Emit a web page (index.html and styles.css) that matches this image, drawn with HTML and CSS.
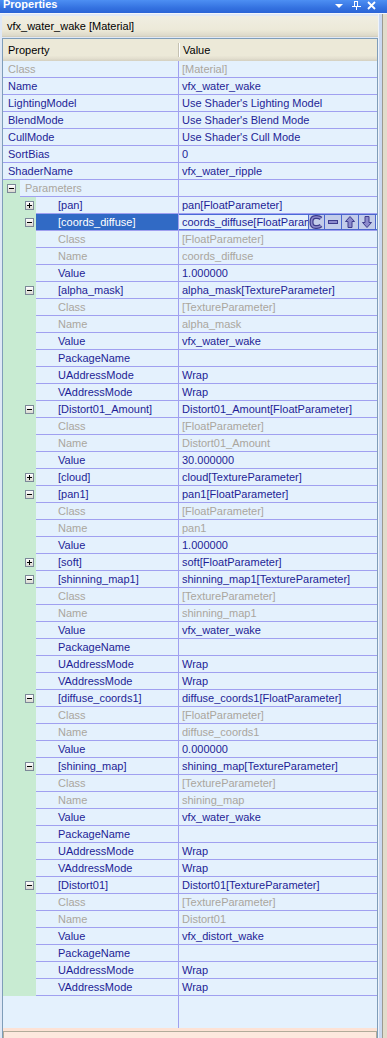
FILE: index.html
```html
<!DOCTYPE html>
<html>
<head>
    <title>Properties</title>
    <link rel="stylesheet" href="styles.css">
</head>
<body>
    <div class="titlebar">
        <span class="title">Properties</span>
        <svg class="tbtns" width="55" height="13" viewBox="0 0 55 13">
            <polygon points="3,4 11,4 7,8" fill="#fff"/>
            <rect x="22.5" y="1.5" width="3" height="5" fill="none" stroke="#fff"/>
            <rect x="25" y="1" width="1" height="6" fill="#fff"/>
            <rect x="20" y="6" width="9" height="1" fill="#fff"/>
            <rect x="24" y="7" width="1" height="3" fill="#fff"/>
            <path d="M36 2 L43 9 M43 2 L36 9" stroke="#fff" stroke-width="1.8"/>
        </svg>
    </div>

    <div class="frame">
        <div class="main">
            <div class="objname">vfx_water_wake [Material]</div>
            <div class="grid">
                <div class="head">
                    <span class="hname">Property</span>
                    <span class="hsep"></span>
                    <span class="hval">Value</span>
                </div>

                <div class="row"><span class="name dim">Class</span><span class="val dim">[Material]</span></div>
                <div class="row"><span class="name">Name</span><span class="val">vfx_water_wake</span></div>
                <div class="row"><span class="name">LightingModel</span><span class="val">Use Shader's Lighting Model</span></div>
                <div class="row"><span class="name">BlendMode</span><span class="val">Use Shader's Blend Mode</span></div>
                <div class="row"><span class="name">CullMode</span><span class="val">Use Shader's Cull Mode</span></div>
                <div class="row"><span class="name">SortBias</span><span class="val">0</span></div>
                <div class="row"><span class="name">ShaderName</span><span class="val">vfx_water_ripple</span></div>
                <div class="row l1"><span class="gut"><i class="tog"></i></span><span class="name dim">Parameters</span><span class="val"></span></div>

                <div class="row l2"><span class="gut"><i class="tog plus"></i></span><span class="name">[pan]</span><span class="val">pan[FloatParameter]</span></div>
                <div class="row l2 sel">
                    <span class="gut"><i class="tog"></i></span>
                    <span class="name">[coords_diffuse]</span>
                    <span class="val">
                        <span class="vtext">coords_diffuse[FloatParam</span>
                        <span class="btns">
                            <span class="btn">
                                <svg width="15" height="14" viewBox="0 0 15 14">
                                    <path d="M12 3.5 Q10.5 2 8 2 L6.5 2 Q2.5 2 2.5 7 Q2.5 12 6.5 12 L8 12 Q10.5 12 12 10.5" fill="none" stroke="#3e3c8c" stroke-width="4"/>
                                    <path d="M12 3.5 Q10.5 2 8 2 L6.5 2 Q2.5 2 2.5 7 Q2.5 12 6.5 12 L8 12 Q10.5 12 12 10.5" fill="none" stroke="#8c8acc" stroke-width="1.6"/>
                                </svg>
                            </span>
                            <span class="btn">
                                <svg width="16" height="14" viewBox="0 0 16 14">
                                    <rect x="3.5" y="5.5" width="9" height="3" fill="#8c8acc" stroke="#3e3c8c"/>
                                </svg>
                            </span>
                            <span class="btn">
                                <svg width="16" height="14" viewBox="0 0 16 14">
                                    <polygon points="8,1.5 12.5,6.5 10,6.5 10,12.5 6,12.5 6,6.5 3.5,6.5" fill="#8c8acc" stroke="#3e3c8c"/>
                                </svg>
                            </span>
                            <span class="btn">
                                <svg width="16" height="14" viewBox="0 0 16 14">
                                    <polygon points="8,12.5 12.5,7.5 10,7.5 10,1.5 6,1.5 6,7.5 3.5,7.5" fill="#8c8acc" stroke="#3e3c8c"/>
                                </svg>
                            </span>
                        </span>
                    </span>
                </div>
                <div class="row l2"><span class="gut"></span><span class="name dim">Class</span><span class="val dim">[FloatParameter]</span></div>
                <div class="row l2"><span class="gut"></span><span class="name dim">Name</span><span class="val dim">coords_diffuse</span></div>
                <div class="row l2"><span class="gut"></span><span class="name">Value</span><span class="val">1.000000</span></div>

                <div class="row l2"><span class="gut"><i class="tog"></i></span><span class="name">[alpha_mask]</span><span class="val">alpha_mask[TextureParameter]</span></div>
                <div class="row l2"><span class="gut"></span><span class="name dim">Class</span><span class="val dim">[TextureParameter]</span></div>
                <div class="row l2"><span class="gut"></span><span class="name dim">Name</span><span class="val dim">alpha_mask</span></div>
                <div class="row l2"><span class="gut"></span><span class="name">Value</span><span class="val">vfx_water_wake</span></div>
                <div class="row l2"><span class="gut"></span><span class="name">PackageName</span><span class="val"></span></div>
                <div class="row l2"><span class="gut"></span><span class="name">UAddressMode</span><span class="val">Wrap</span></div>
                <div class="row l2"><span class="gut"></span><span class="name">VAddressMode</span><span class="val">Wrap</span></div>

                <div class="row l2"><span class="gut"><i class="tog"></i></span><span class="name">[Distort01_Amount]</span><span class="val">Distort01_Amount[FloatParameter]</span></div>
                <div class="row l2"><span class="gut"></span><span class="name dim">Class</span><span class="val dim">[FloatParameter]</span></div>
                <div class="row l2"><span class="gut"></span><span class="name dim">Name</span><span class="val dim">Distort01_Amount</span></div>
                <div class="row l2"><span class="gut"></span><span class="name">Value</span><span class="val">30.000000</span></div>

                <div class="row l2"><span class="gut"><i class="tog plus"></i></span><span class="name">[cloud]</span><span class="val">cloud[TextureParameter]</span></div>

                <div class="row l2"><span class="gut"><i class="tog"></i></span><span class="name">[pan1]</span><span class="val">pan1[FloatParameter]</span></div>
                <div class="row l2"><span class="gut"></span><span class="name dim">Class</span><span class="val dim">[FloatParameter]</span></div>
                <div class="row l2"><span class="gut"></span><span class="name dim">Name</span><span class="val dim">pan1</span></div>
                <div class="row l2"><span class="gut"></span><span class="name">Value</span><span class="val">1.000000</span></div>

                <div class="row l2"><span class="gut"><i class="tog plus"></i></span><span class="name">[soft]</span><span class="val">soft[FloatParameter]</span></div>

                <div class="row l2"><span class="gut"><i class="tog"></i></span><span class="name">[shinning_map1]</span><span class="val">shinning_map1[TextureParameter]</span></div>
                <div class="row l2"><span class="gut"></span><span class="name dim">Class</span><span class="val dim">[TextureParameter]</span></div>
                <div class="row l2"><span class="gut"></span><span class="name dim">Name</span><span class="val dim">shinning_map1</span></div>
                <div class="row l2"><span class="gut"></span><span class="name">Value</span><span class="val">vfx_water_wake</span></div>
                <div class="row l2"><span class="gut"></span><span class="name">PackageName</span><span class="val"></span></div>
                <div class="row l2"><span class="gut"></span><span class="name">UAddressMode</span><span class="val">Wrap</span></div>
                <div class="row l2"><span class="gut"></span><span class="name">VAddressMode</span><span class="val">Wrap</span></div>

                <div class="row l2"><span class="gut"><i class="tog"></i></span><span class="name">[diffuse_coords1]</span><span class="val">diffuse_coords1[FloatParameter]</span></div>
                <div class="row l2"><span class="gut"></span><span class="name dim">Class</span><span class="val dim">[FloatParameter]</span></div>
                <div class="row l2"><span class="gut"></span><span class="name dim">Name</span><span class="val dim">diffuse_coords1</span></div>
                <div class="row l2"><span class="gut"></span><span class="name">Value</span><span class="val">0.000000</span></div>

                <div class="row l2"><span class="gut"><i class="tog"></i></span><span class="name">[shining_map]</span><span class="val">shining_map[TextureParameter]</span></div>
                <div class="row l2"><span class="gut"></span><span class="name dim">Class</span><span class="val dim">[TextureParameter]</span></div>
                <div class="row l2"><span class="gut"></span><span class="name dim">Name</span><span class="val dim">shining_map</span></div>
                <div class="row l2"><span class="gut"></span><span class="name">Value</span><span class="val">vfx_water_wake</span></div>
                <div class="row l2"><span class="gut"></span><span class="name">PackageName</span><span class="val"></span></div>
                <div class="row l2"><span class="gut"></span><span class="name">UAddressMode</span><span class="val">Wrap</span></div>
                <div class="row l2"><span class="gut"></span><span class="name">VAddressMode</span><span class="val">Wrap</span></div>

                <div class="row l2"><span class="gut"><i class="tog"></i></span><span class="name">[Distort01]</span><span class="val">Distort01[TextureParameter]</span></div>
                <div class="row l2"><span class="gut"></span><span class="name dim">Class</span><span class="val dim">[TextureParameter]</span></div>
                <div class="row l2"><span class="gut"></span><span class="name dim">Name</span><span class="val dim">Distort01</span></div>
                <div class="row l2"><span class="gut"></span><span class="name">Value</span><span class="val">vfx_distort_wake</span></div>
                <div class="row l2"><span class="gut"></span><span class="name">PackageName</span><span class="val"></span></div>
                <div class="row l2"><span class="gut"></span><span class="name">UAddressMode</span><span class="val">Wrap</span></div>
                <div class="row l2"><span class="gut"></span><span class="name">VAddressMode</span><span class="val">Wrap</span></div>

                <div class="filler"><span class="fname"></span><span class="fval"></span></div>
                <div class="desc"><div class="descbox"></div></div>
            </div>
        </div>
        <div class="side"></div>
        <div class="edge"></div>
    </div>
</body>
</html>
```

FILE: styles.css
```css
body { margin: 0; height: 1038px; overflow: hidden; background: #dfe8f6; font-family: "Liberation Sans", Arial, sans-serif; font-size: 11px; }

/* window caption */
.titlebar { height: 13px; display: flex; justify-content: space-between; background: linear-gradient(#4d8ff3, #3472e0 60%, #2a63d6); border-bottom: 1px solid #f2f5fb; color: #fff; }
.title { font-weight: bold; padding-left: 3px; line-height: 9px; }
.tbtns { flex: none; }

.frame { display: flex; height: 1024px; }
.main { width: 376px; margin-left: 2px; padding-top: 2px; display: flex; flex-direction: column; box-sizing: border-box; }
.side { width: 3px; background: #c9d8f1; border-left: 1px solid #eef3fb; border-right: 1px solid #9c9a90; }
.edge { flex: 1; background: #e1dccb; }

.objname { height: 20px; line-height: 21px; padding-left: 5px; margin-bottom: 1px; color: #000; background: linear-gradient(#f0eee2, #ece9d8 70%, #dcd8c8); border-bottom: 1px solid #d2cebe; }

/* property grid */
.grid { flex: 1; display: flex; flex-direction: column; background: #e4f1fd; border: 1px solid #7f9db9; border-bottom: 0; }
.head { height: 22px; flex: none; display: flex; align-items: center; background: linear-gradient(#ece9d8 75%, #e3dfcf 88%, #d4d0c0); }
.hname { width: 175px; padding-left: 5px; box-sizing: border-box; }
.hsep { width: 1px; height: 14px; background: #c5c1b1; border-right: 1px solid #fff; }
.hval { padding-left: 3px; }

.row { display: flex; height: 17px; line-height: 16px; flex: none; }
.gut { flex: none; display: flex; align-items: center; background: #c8ebd2; }
.l1 .gut { width: 17px; }
.l2 .gut { width: 33px; }
.name { flex: 1; min-width: 0; padding-left: 5px; color: #1e1e96; border-bottom: 1px solid #a0a0f0; white-space: nowrap; overflow: hidden; }
.l2 .name { padding-left: 22px; }
.val { width: 199px; flex: none; box-sizing: border-box; padding-left: 3px; color: #1e1e96; border-left: 1px solid #a0a0f0; border-bottom: 1px solid #a0a0f0; white-space: nowrap; overflow: hidden; }
.dim { color: #aaa69e; }

.tog { width: 9px; height: 9px; box-sizing: border-box; border: 1px solid #7c8898; background: linear-gradient(#000, #000) center / 5px 1px no-repeat, linear-gradient(#fff, #d9d9d0); }
.tog.plus { background: linear-gradient(#000, #000) center / 5px 1px no-repeat, linear-gradient(#000, #000) center / 1px 5px no-repeat, linear-gradient(#fff, #d9d9d0); }
.l1 .tog { margin-left: 4px; }
.l2 .tog { margin-left: 22px; }

/* selected row */
.sel .name { background: #316ac5; color: #fff; }
.sel .val { display: flex; padding-right: 1px; box-shadow: inset 0 1px 0 #4a6ad8, inset 0 -1px 0 #4a6ad8; }
.vtext { flex: 1; min-width: 0; }
.btns { display: flex; height: 16px; box-sizing: border-box; border: 1px solid #4a66cc; background: #c3cdea; }
.btn { width: 16px; display: flex; align-items: center; justify-content: center; border-left: 1px solid #4a66cc; }
.btn:first-child { width: 15px; border-left: 0; }

.filler { flex: 1; display: flex; }
.fname { width: 175px; }
.fval { flex: 1; border-left: 1px solid #a0a0f0; }

.desc { height: 10px; flex: none; padding-top: 3px; box-sizing: border-box; background: #fde2d5; }
.descbox { height: 7px; box-sizing: border-box; border: 1px solid #b2ab9a; border-bottom: 0; background: #fde8de; }
```
